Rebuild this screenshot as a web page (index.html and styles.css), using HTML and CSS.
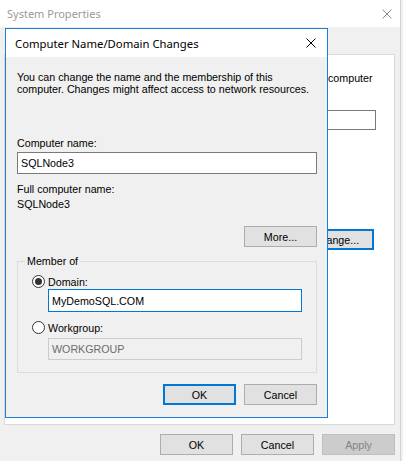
FILE: index.html
```html
<!DOCTYPE html>
<html>
<head>
<meta charset="utf-8">
<link rel="stylesheet" href="styles.css">
</head>
<body>
<div class="win">
  <div class="titlebar">
    <span class="title">System Properties</span>
    <svg class="x-icon gray" width="10" height="10" viewBox="0 0 10 10"><path d="M0.5 0.5L9.5 9.5M9.5 0.5L0.5 9.5" stroke="currentColor" stroke-width="1" fill="none"/></svg>
  </div>
  <div class="tabstrip"></div>
  <div class="panel">
    <p class="bg-desc">computer</p>
    <div class="bg-input"></div>
    <div class="btn bg-change">Change...</div>
  </div>
  <div class="footer">
    <div class="btn">OK</div>
    <div class="btn">Cancel</div>
    <div class="btn disabled">Apply</div>
  </div>

  <div class="dialog">
    <div class="dtitle">
      <span class="dtitle-text">Computer Name/Domain Changes</span>
      <svg class="x-icon" width="10" height="10" viewBox="0 0 10 10"><path d="M0.5 0.5L9.5 9.5M9.5 0.5L0.5 9.5" stroke="currentColor" stroke-width="1" fill="none"/></svg>
    </div>
    <div class="dbody">
      <p class="intro">You can change the name and the membership of this<br>computer. Changes might affect access to network resources.</p>
      <div class="label lbl-name">Computer name:</div>
      <div class="input name-input">SQLNode3</div>
      <div class="label lbl-full">Full computer name:</div>
      <div class="label lbl-fullval">SQLNode3</div>
      <div class="more-row"><div class="btn">More...</div></div>
      <div class="group">
        <div class="group-title">Member of</div>
        <div class="radio-row first"><span class="radio checked"></span><span>Domain:</span></div>
        <div class="input domain-input">MyDemoSQL.COM</div>
        <div class="radio-row second"><span class="radio"></span><span>Workgroup:</span></div>
        <div class="input wg-input">WORKGROUP</div>
      </div>
      <div class="dbuttons">
        <div class="btn default">OK</div>
        <div class="btn">Cancel</div>
      </div>
    </div>
  </div>
</div>
</body>
</html>
```

FILE: styles.css
```css
* { box-sizing: border-box; }
html, body {
  margin: 0;
  padding: 0;
  width: 403px;
  height: 461px;
  overflow: hidden;
  background: #f0f0f0;
}
body {
  font-family: "Liberation Sans", Arial, sans-serif;
  font-size: 10.7px;
  color: #000;
}
.win {
  position: relative;
  width: 401px;
  height: 461px;
  background: #f0f0f0;
  border-right: 1px solid #d4d4d4;
}
.titlebar {
  height: 27px;
  background: #fff;
  display: flex;
  align-items: center;
  justify-content: space-between;
  padding: 0 8px 0 7px;
}
.title {
  font-family: "Noto Sans", sans-serif;
  font-size: 11px;
  color: #9a9a9a;
}
.x-icon { display: block; color: #000; }
.x-icon.gray { color: #8a8a8a; }
.tabstrip { height: 27px; }
.panel {
  margin-left: 4px;
  width: 391px;
  height: 371px;
  background: #fff;
  border: 1px solid #d9d9d9;
}
.bg-desc {
  margin: 17px 0 0 323px;
  line-height: 12px;
}
.bg-input {
  margin: 26px 0 0 155px;
  width: 216px;
  height: 20px;
  border: 1px solid #7a7a7a;
  background: #fff;
}
.btn {
  width: 73px;
  height: 21px;
  background: #e1e1e1;
  border: 1px solid #adadad;
  display: flex;
  align-items: center;
  justify-content: center;
  line-height: 12px;
}
.btn.default { border: 2px solid #0078d7; }
.btn.disabled {
  background: #cccccc;
  border-color: #bfbfbf;
  color: #838383;
}
.bg-change {
  margin: 99px 0 0 293px;
  width: 76px;
  border: 2px solid #0078d7;
}
.footer {
  height: 36px;
  display: flex;
  justify-content: flex-end;
  align-items: flex-start;
  gap: 8px;
  padding: 9px 5px 0 0;
}
.dialog {
  position: absolute;
  left: 5px;
  top: 28px;
  width: 323px;
  height: 390px;
  background: #f0f0f0;
  border: 1px solid #1c7ed6;
  display: flex;
  flex-direction: column;
}
.dtitle {
  height: 28px;
  background: #fff;
  display: flex;
  align-items: center;
  justify-content: space-between;
  padding: 0 11px 0 9px;
  flex: none;
}
.dtitle-text {
  font-family: "Noto Sans", sans-serif;
  font-size: 11.3px;
  color: #000;
}
.dbody {
  padding: 14px 10px 0 11px;
  display: flex;
  flex-direction: column;
}
.intro { margin: 0; line-height: 12px; }
.label { line-height: 12px; }
.lbl-name { margin-top: 42px; }
.input {
  background: #fff;
  border: 1px solid #7a7a7a;
  display: flex;
  align-items: center;
  padding-left: 3px;
  line-height: 12px;
}
.name-input { margin-top: 3px; height: 22px; }
.lbl-full { margin-top: 9px; }
.lbl-fullval { margin-top: 3px; }
.more-row {
  margin-top: 16px;
  display: flex;
  justify-content: flex-end;
}
.group {
  margin-top: 14px;
  border: 1px solid #dcdcdc;
  display: flex;
  flex-direction: column;
}
.group-title {
  margin: -7px 0 0 7px;
  padding: 0 2px;
  background: #f0f0f0;
  width: max-content;
  line-height: 12px;
}
.radio-row {
  display: flex;
  align-items: center;
  gap: 3px;
  height: 13px;
  margin-left: 14px;
  line-height: 12px;
}
.radio-row.first { margin-top: 8px; }
.radio-row.second { margin-top: 9px; }
.radio {
  width: 13px;
  height: 13px;
  border-radius: 50%;
  border: 1px solid #333;
  background: #fff;
  display: flex;
  align-items: center;
  justify-content: center;
}
.radio.checked::after {
  content: "";
  width: 7px;
  height: 7px;
  border-radius: 50%;
  background: #333;
}
.domain-input {
  margin: 1px 0 0 30px;
  width: 254px;
  height: 23px;
  border-color: #0078d7;
}
.wg-input {
  margin: 4px 0 12px 30px;
  width: 254px;
  height: 22px;
  background: #f0f0f0;
  border-color: #cccccc;
  color: #6d6d6d;
}
.dbuttons {
  margin-top: 11px;
  display: flex;
  justify-content: flex-end;
  gap: 8px;
}
```
